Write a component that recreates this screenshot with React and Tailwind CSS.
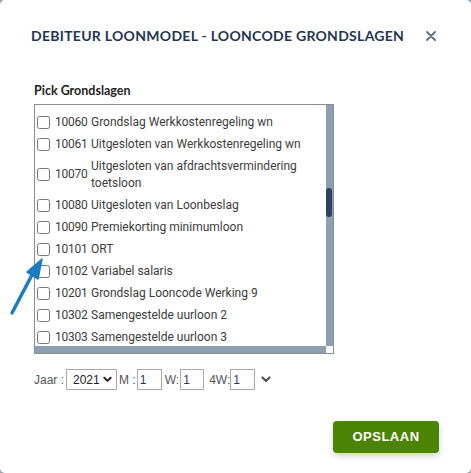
import React from 'react'

const rows = [
    { code: '10060', name: 'Grondslag Werkkostenregeling wn' },
    { code: '10061', name: 'Uitgesloten van Werkkostenregeling wn' },
    { code: '10070', name: 'Uitgesloten van afdrachtsvermindering toetsloon' },
    { code: '10080', name: 'Uitgesloten van Loonbeslag' },
    { code: '10090', name: 'Premiekorting minimumloon' },
    { code: '10101', name: 'ORT' },
    { code: '10102', name: 'Variabel salaris' },
    { code: '10201', name: 'Grondslag Looncode Werking 9' },
    { code: '10302', name: 'Samengestelde uurloon 2' },
    { code: '10303', name: 'Samengestelde uurloon 3' },
]

function Chevron({ className }) {
    return (
        <svg viewBox="0 0 10 7" className={className} fill="none" stroke="currentColor" strokeWidth="2.2" strokeLinecap="round" strokeLinejoin="round">
            <path d="M1.5 1.5 L5 5 L8.5 1.5" />
        </svg>
    )
}

export default function App() {
    return (
        <div className="w-[471px] h-[473px] bg-[#9aa4ad]">
            <div className="relative w-full h-full bg-white rounded-[5px] font-['Lato',sans-serif]">
                {/* Header */}
                <div className="flex items-center justify-between pt-[27px] pl-[31px] pr-[35px]">
                    <h1 className="whitespace-nowrap text-[14px] leading-[18px] font-bold tracking-[0.02em] text-[#1f3652]">
                        DEBITEUR LOONMODEL - LOONCODE GRONDSLAGEN
                    </h1>
                    <svg viewBox="0 0 10 10" className="w-[10px] h-[10px] text-[#5c6f84]" stroke="currentColor" strokeWidth="1.8" strokeLinecap="round">
                        <path d="M1 1 L9 9 M9 1 L1 9" />
                    </svg>
                </div>

                {/* Body */}
                <div className="pl-[34px] pt-[38px]">
                    <div className="text-[12.5px] leading-[16px] font-bold text-[#222] mb-[5px]">Pick Grondslagen</div>
                    <div className="w-[300px] h-[250px] border border-[#8c8c8c] flex flex-col">
                        <div className="flex flex-1 min-h-0">
                            <div className="flex-1 overflow-hidden pt-[6px] pl-[2px] font-['Roboto',sans-serif]">
                                {rows.map(r => (
                                    <div key={r.code} className="flex items-center py-[2.5px] leading-[17px] text-[12px] text-[#3c3c3c]">
                                        <input type="checkbox" className="m-0 w-[13px] h-[13px] shrink-0" />
                                        <span className="w-[41px] shrink-0 pl-[5px] whitespace-nowrap tracking-[-0.02em]">{r.code}</span>
                                        <span className="flex-1 pr-[12px]">{r.name}</span>
                                    </div>
                                ))}
                            </div>
                            <div className="w-[7px] bg-[#8ca0b2] relative">
                                <div className="absolute left-0 right-[1px] top-[83px] h-[29px] rounded-[3px] bg-[#29455f]" />
                            </div>
                        </div>
                        <div className="flex h-[7px]">
                            <div className="flex-1 bg-[#8ca0b2]" />
                            <div className="w-[7px] bg-white" />
                        </div>
                    </div>
                </div>

                {/* Period */}
                <div className="flex items-center pl-[34px] pt-[15px] text-[12px] text-[#555] font-['Liberation_Sans',sans-serif]">
                    <span className="mr-[2px]">Jaar :</span>
                    <div className="flex items-center justify-between w-[51px] h-[21px] border border-[#a8a8a8] pl-[6px] pr-[4px] text-[#222]">
                        <span>2021</span>
                        <Chevron className="w-[9px] h-[7px] text-[#222]" />
                    </div>
                    <span className="ml-[2px] mr-[1px]">M :</span>
                    <input readOnly value="1" className="w-[25px] h-[21px] border border-[#a8a8a8] px-[2px] text-[#1f3a5a] outline-none" />
                    <span className="ml-[3px] mr-[1px]">W:</span>
                    <input readOnly value="1" className="w-[24px] h-[21px] border border-[#a8a8a8] px-[2px] text-[#1f3a5a] outline-none" />
                    <span className="ml-[5px]">4W:</span>
                    <input readOnly value="1" className="w-[25px] h-[21px] border border-[#a8a8a8] px-[2px] text-[#1f3a5a] outline-none" />
                    <Chevron className="ml-[6px] w-[10px] h-[7px] text-[#555]" />
                </div>

                {/* Footer */}
                <div className="flex justify-end pr-[32px] pt-[31px]">
                    <button className="w-[106px] h-[32px] rounded-[4px] bg-[#4b8402] text-white text-[13px] font-bold tracking-[0.04em] font-['Liberation_Sans',sans-serif] shadow-[0_3px_6px_rgba(0,0,0,0.18)]">
                        OPSLAAN
                    </button>
                </div>

                {/* Annotation arrow */}
                <svg className="absolute left-0 top-0 w-[60px] h-[330px] pointer-events-none" viewBox="0 0 60 330">
                    <path d="M12 313 L33 273" stroke="#1a7cc1" strokeWidth="3.5" strokeLinecap="round" />
                    <path d="M42 259 L27 272 L38 279 Z" fill="#1a7cc1" stroke="#1a7cc1" strokeWidth="1.5" strokeLinejoin="round" />
                </svg>
            </div>
        </div>
    )
}
